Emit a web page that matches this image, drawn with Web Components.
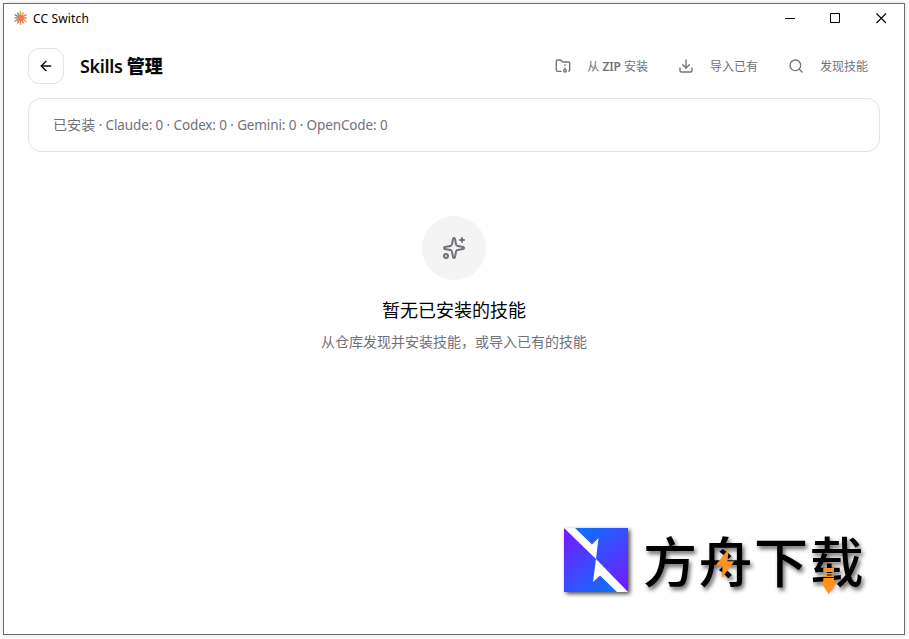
<!DOCTYPE html>
<html lang="zh-CN">
<head>
<meta charset="utf-8">
<title>CC Switch</title>
<style>
body {
    margin: 0;
    height: 639px;
    overflow: hidden;
    background: #fcfcfc;
    font-family: "Noto Sans", "Noto Sans CJK SC", sans-serif;
}
</style>
</head>
<body>
<cc-window>
    <cc-titlebar slot="titlebar">CC Switch</cc-titlebar>
    <cc-header>
        Skills <b>管理</b>
        <cc-action slot="actions" icon="archive">从 <b>ZIP</b> 安装</cc-action>
        <cc-action slot="actions" icon="download">导入已有</cc-action>
        <cc-action slot="actions" icon="search">发现技能</cc-action>
    </cc-header>
    <cc-summary><span>已安装</span> · Claude: 0 · Codex: 0 · Gemini: 0 · OpenCode: 0</cc-summary>
    <cc-empty>
        暂无已安装的技能
        <span slot="hint">从仓库发现并安装技能，或导入已有的技能</span>
    </cc-empty>
    <cc-watermark slot="overlay">方舟下载</cc-watermark>
</cc-window>

<script>
const icons = {
    back: '<path d="m12 19-7-7 7-7"/><path d="M19 12H5"/>',
    archive: '<circle cx="15" cy="19" r="2"/><path d="M20.9 19.8A2 2 0 0 0 22 18V8a2 2 0 0 0-2-2h-7.9a2 2 0 0 1-1.69-.9L9.6 3.9A2 2 0 0 0 7.93 3H4a2 2 0 0 0-2 2v13a2 2 0 0 0 2 2h5.1"/><path d="M15 11v-1"/><path d="M15 17v-2"/>',
    download: '<path d="M12 15V3"/><path d="M21 15v4a2 2 0 0 1-2 2H5a2 2 0 0 1-2-2v-4"/><path d="m7 10 5 5 5-5"/>',
    search: '<circle cx="11" cy="11" r="8"/><path d="m21 21-4.34-4.34"/>',
    sparkles: '<path d="M11.017 2.814a1 1 0 0 1 1.966 0l1.051 5.558a2 2 0 0 0 1.594 1.594l5.558 1.051a1 1 0 0 1 0 1.966l-5.558 1.051a2 2 0 0 0-1.594 1.594l-1.051 5.558a1 1 0 0 1-1.966 0l-1.051-5.558a2 2 0 0 0-1.594-1.594l-5.558-1.051a1 1 0 0 1 0-1.966l5.558-1.051a2 2 0 0 0 1.594-1.594z"/><path d="M20 2v4"/><path d="M22 4h-4"/><circle cx="4" cy="20" r="2"/>'
};

class BaseElement extends HTMLElement {
    constructor() {
        super();
        this.attachShadow({ mode: "open" });
    }

    connectedCallback() {
        this.shadowRoot.innerHTML = this.render();
    }
}

class CcIcon extends BaseElement {
    render() {
        const size = this.getAttribute("size") || 16;
        return `
        <style>
        :host { display: block; flex: none; width: ${size}px; height: ${size}px; }
        svg { display: block; }
        </style>
        <svg width="${size}" height="${size}" viewBox="0 0 24 24" fill="none" stroke="currentColor" stroke-width="2" stroke-linecap="round" stroke-linejoin="round">${icons[this.getAttribute("name")]}</svg>
        `;
    }
}

class CcWindow extends BaseElement {
    render() {
        return `
        <style>
        :host {
            display: flex;
            flex-direction: column;
            position: relative;
            box-sizing: border-box;
            width: 902px;
            height: 632px;
            margin: 3px;
            border: 1px solid #6d6d70;
            background: #fff;
            box-shadow: 0 0 4px rgba(0, 0, 0, .12);
        }
        main { padding: 16px 24px 0; }
        </style>
        <slot name="titlebar"></slot>
        <main><slot></slot></main>
        <slot name="overlay"></slot>
        `;
    }
}

class CcTitlebar extends BaseElement {
    render() {
        // rays of the app logo, alternating long and short
        const colors = ["#e9a13b", "#e8a04f", "#e87b4f", "#e87b4f", "#e8924f", "#e87b4f", "#d9805c", "#6a9d97", "#e87b4f", "#e87b4f", "#4f9fa4", "#58a7a4"];
        const rays = colors.map((c, i) => `<path stroke="${c}" d="M0-1V-${i % 2 ? 5.6 : 6.2}" transform="rotate(${i * 30})"/>`).join("");
        return `
        <style>
        :host {
            display: flex;
            align-items: center;
            justify-content: space-between;
            height: 28px;
            padding: 0 17px 0 9px;
            font-size: 12px;
            letter-spacing: .16px;
            color: #000;
        }
        .app, .controls { display: flex; align-items: center; }
        .app { gap: 6px; }
        .controls { gap: 35px; }
        svg { display: block; }
        </style>
        <div class="app">
            <svg width="14" height="14" viewBox="-7.5 -7 14 14" stroke-width="1.5" stroke-linecap="round">${rays}<circle r="3" fill="#e87b4f"/></svg>
            <span><slot></slot></span>
        </div>
        <div class="controls">
            <svg width="11" height="11" stroke="#000"><path d="M1 5.500H11"/></svg>
            <svg width="11" height="11" fill="none" stroke="#000"><path d="M.5.5H9.500V9.500H.5Z"/></svg>
            <svg width="11" height="11" stroke="#000" stroke-width="1.1"><path d="M.5.5 10 10M10 .5.5 10"/></svg>
        </div>
        `;
    }
}

class CcHeader extends BaseElement {
    render() {
        return `
        <style>
        :host { display: flex; align-items: center; height: 36px; color: #09090b; }
        button {
            display: grid;
            place-items: center;
            width: 36px;
            height: 36px;
            padding: 0;
            border: 1px solid #e4e4e7;
            border-radius: 11px;
            background: #fff;
            color: inherit;
        }
        h1 {
            margin: 0 0 0 16px;
            font-size: 18px;
            line-height: 28px;
            font-weight: 560;
            letter-spacing: -.36px;
            white-space: nowrap;
        }
        ::slotted(b) { letter-spacing: 0; }
        nav { display: flex; gap: 6px; margin-left: auto; }
        </style>
        <button aria-label="back"><cc-icon name="back"></cc-icon></button>
        <h1><slot></slot></h1>
        <nav><slot name="actions"></slot></nav>
        `;
    }
}

class CcAction extends BaseElement {
    render() {
        return `
        <style>
        :host {
            display: flex;
            align-items: center;
            gap: 16px;
            padding: 0 12px;
            font-size: 12px;
            line-height: 32px;
            color: #71717a;
            white-space: nowrap;
        }
        span { padding-top: 2px; }
        ::slotted(b) { font-weight: 560; letter-spacing: -.1px; }
        </style>
        <cc-icon name="${this.getAttribute("icon")}"></cc-icon>
        <span><slot></slot></span>
        `;
    }
}

class CcSummary extends BaseElement {
    render() {
        return `
        <style>
        :host {
            display: flex;
            align-items: center;
            box-sizing: border-box;
            height: 54px;
            margin-top: 14px;
            padding: 0 24px 2px;
            border: 1px solid #e4e4e7;
            border-radius: 13px;
            font-size: 13.5px;
            letter-spacing: -.12px;
            color: #71717a;
        }
        ::slotted(span) { font-size: 14px; letter-spacing: .1px; }
        </style>
        <div><slot></slot></div>
        `;
    }
}

class CcEmpty extends BaseElement {
    render() {
        return `
        <style>
        :host {
            display: flex;
            flex-direction: column;
            align-items: center;
            padding-top: 64px;
            text-align: center;
        }
        .badge {
            display: grid;
            place-items: center;
            width: 64px;
            height: 64px;
            border-radius: 50%;
            background: #f4f4f5;
            color: #71717a;
        }
        h3 {
            margin: 16px 0 8px;
            font-size: 18px;
            line-height: 28px;
            font-weight: 400;
            color: #000;
        }
        p { margin: 0; font-size: 14px; line-height: 20px; color: #71717a; }
        </style>
        <div class="badge"><cc-icon name="sparkles" size="24"></cc-icon></div>
        <h3><slot></slot></h3>
        <p><slot name="hint"></slot></p>
        `;
    }
}

class CcWatermark extends BaseElement {
    render() {
        return `
        <style>
        :host {
            display: flex;
            align-items: center;
            gap: 15px;
            position: absolute;
            left: 560px;
            top: 524px;
            height: 64px;
            color: #000;
        }
        .logo { display: block; filter: drop-shadow(2px 2px 2px rgba(0, 0, 0, .7)); }
        .brand {
            position: relative;
            font: 500 54px/62px "Noto Sans CJK SC", sans-serif;
            letter-spacing: 1.5px;
            white-space: nowrap;
            text-shadow: 2px 3px 4px rgba(0, 0, 0, .6);
        }
        .marks { position: absolute; left: 0; top: -1px; }
        </style>
        <svg class="logo" width="64" height="64" viewBox="0 0 64 64">
            <defs>
                <linearGradient id="a" gradientUnits="userSpaceOnUse" x1="14" y1="0" x2="64" y2="60"><stop stop-color="#0b72ff"/><stop offset="1" stop-color="#751aff"/></linearGradient>
                <linearGradient id="b" gradientUnits="userSpaceOnUse" x1="0" y1="4" x2="50" y2="64"><stop stop-color="#751aff"/><stop offset="1" stop-color="#0b72ff"/></linearGradient>
            </defs>
            <path fill="#fff" d="M0 0H64V64H0Z"/>
            <path fill="url(#a)" d="M11 0H64V64L32 31 34.500 10 28 16.500Z"/>
            <path fill="url(#b)" d="M53 64H0V0L32 31 29 54 36 47.500Z"/>
        </svg>
        <div class="brand">
            <slot></slot>
            <svg class="marks" width="225" height="72" viewBox="643 527 225 72" fill="#ff921e">
                <path d="M729 547.300 715.700 564.300H722.700L721.700 577.300 734.300 560.300H727.300Z"/>
                <path d="M823.300 567H834V571H823.300ZM823.300 572H834V573.500H823.300ZM823.300 574.500H834V576H823.300ZM823.300 577H834V581H837L828.700 593.300 820.700 581H823.300Z"/>
            </svg>
        </div>
        `;
    }
}

customElements.define("cc-icon", CcIcon);
customElements.define("cc-window", CcWindow);
customElements.define("cc-titlebar", CcTitlebar);
customElements.define("cc-header", CcHeader);
customElements.define("cc-action", CcAction);
customElements.define("cc-summary", CcSummary);
customElements.define("cc-empty", CcEmpty);
customElements.define("cc-watermark", CcWatermark);
</script>
</body>
</html>
